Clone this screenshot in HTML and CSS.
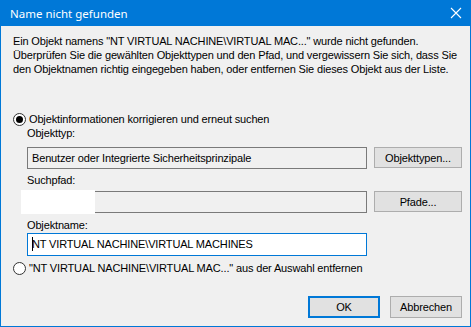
FILE: index.html
```html
<!DOCTYPE html>
<html lang="de">
<head>
    <meta charset="UTF-8">
    <meta name="viewport" content="width=device-width, initial-scale=1.0">
    <title>Name nicht gefunden</title>
    <link rel="stylesheet" href="styles.css">
</head>
<body>
    <div class="window">
        <div class="titlebar">
            <span class="title">Name nicht gefunden</span>
            <svg class="close" width="12" height="12" viewBox="0 0 12 12">
                <path d="M1 1 L11 11 M11 1 L1 11" stroke="#fff" stroke-width="1.1" fill="none"/>
            </svg>
        </div>
        <div class="content">
            <p class="message">
                Ein Objekt namens "NT VIRTUAL NACHINE\VIRTUAL MAC..." wurde nicht gefunden.<br>
                Überprüfen Sie die gewählten Objekttypen und den Pfad, und vergewissern Sie sich, dass Sie<br>
                den Objektnamen richtig eingegeben haben, oder entfernen Sie dieses Objekt aus der Liste.
            </p>

            <div class="radio-row first">
                <span class="radio checked"></span>
                <span>Objektinformationen korrigieren und erneut suchen</span>
            </div>

            <div class="group">
                <div class="label">Objekttyp:</div>
                <div class="field-row">
                    <div class="textbox readonly">Benutzer oder Integrierte Sicherheitsprinzipale</div>
                    <button class="btn">Objekttypen...</button>
                </div>

                <div class="label">Suchpfad:</div>
                <div class="field-row path-row">
                    <div class="textbox readonly"><span class="redacted"></span></div>
                    <button class="btn">Pfade...</button>
                </div>

                <div class="label">Objektname:</div>
                <div class="field-row name-row">
                    <div class="textbox active"><span class="caret"></span>NT VIRTUAL NACHINE\VIRTUAL MACHINES</div>
                </div>
            </div>

            <div class="radio-row second">
                <span class="radio"></span>
                <span>"NT VIRTUAL NACHINE\VIRTUAL MAC..." aus der Auswahl entfernen</span>
            </div>

            <div class="actions">
                <button class="btn default">OK</button>
                <button class="btn">Abbrechen</button>
            </div>
        </div>
    </div>
</body>
</html>
```

FILE: styles.css
```css
body {
    margin: 0;
    font-family: "Liberation Sans", Arial, sans-serif;
    font-size: 11px;
    letter-spacing: -0.15px;
    color: #000;
    background: #f0f0f0;
}
.window {
    width: 471px;
    height: 327px;
    box-sizing: border-box;
    border: 1px solid #0078d7;
    border-top: none;
    background: #f0f0f0;
    overflow: hidden;
}
.titlebar {
    height: 26px;
    margin: 0 -1px;
    background: #0078d7;
    color: #fff;
    display: flex;
    align-items: center;
    justify-content: space-between;
    padding: 0 9px 0 10px;
    letter-spacing: 0;
}
.title {
    font-family: "Noto Sans", "Open Sans", sans-serif;
    font-size: 11.5px;
}
.content {
    padding: 8px 0 0 12px;
}
.message {
    margin: 0;
    line-height: 14px;
    white-space: nowrap;
}
.radio-row {
    display: flex;
    align-items: center;
    gap: 3px;
    height: 14px;
    white-space: nowrap;
}
.radio-row.first {
    margin-top: 36px;
}
.radio-row.second {
    margin-top: 5px;
}
.radio {
    width: 11px;
    height: 11px;
    border: 1px solid #333;
    border-radius: 50%;
    background: #fff;
    position: relative;
}
.radio.checked::after {
    content: "";
    position: absolute;
    left: 2px;
    top: 2px;
    width: 7px;
    height: 7px;
    border-radius: 50%;
    background: #000;
}
.group {
    padding-left: 14px;
}
.label {
    line-height: 14px;
}
.label + .field-row {
    margin-top: 7px;
}
.label + .path-row {
    margin-top: 4px;
}
.label + .name-row {
    margin-top: 1px;
}
.field-row + .label {
    margin-top: 4px;
}
.path-row + .label {
    margin-top: 5px;
}
.field-row {
    display: flex;
    gap: 7px;
}
.textbox {
    width: 340px;
    height: 22px;
    box-sizing: border-box;
    border: 1px solid #7a7a7a;
    padding: 3px 4px;
    line-height: 14px;
    position: relative;
    white-space: nowrap;
}
.textbox.readonly {
    background: #f0f0f0;
}
.textbox.active {
    height: 23px;
    background: #fff;
    border-color: #0078d7;
}
.redacted {
    position: absolute;
    left: -7px;
    top: -2px;
    width: 74px;
    height: 24px;
    background: #fff;
}
.caret {
    display: inline-block;
    width: 1px;
    height: 14px;
    background: #000;
    vertical-align: top;
    margin-right: -1px;
}
.btn {
    font-family: inherit;
    font-size: 11px;
    letter-spacing: -0.15px;
    color: #000;
    background: #e1e1e1;
    border: 1px solid #adadad;
    height: 21px;
    width: 88px;
    padding: 0;
}
.actions {
    display: flex;
    justify-content: flex-end;
    gap: 10px;
    margin-top: 21px;
    padding-right: 8px;
}
.actions .btn {
    width: 72px;
    height: 22px;
}
.actions .btn.default {
    border: 2px solid #0078d7;
}
```
